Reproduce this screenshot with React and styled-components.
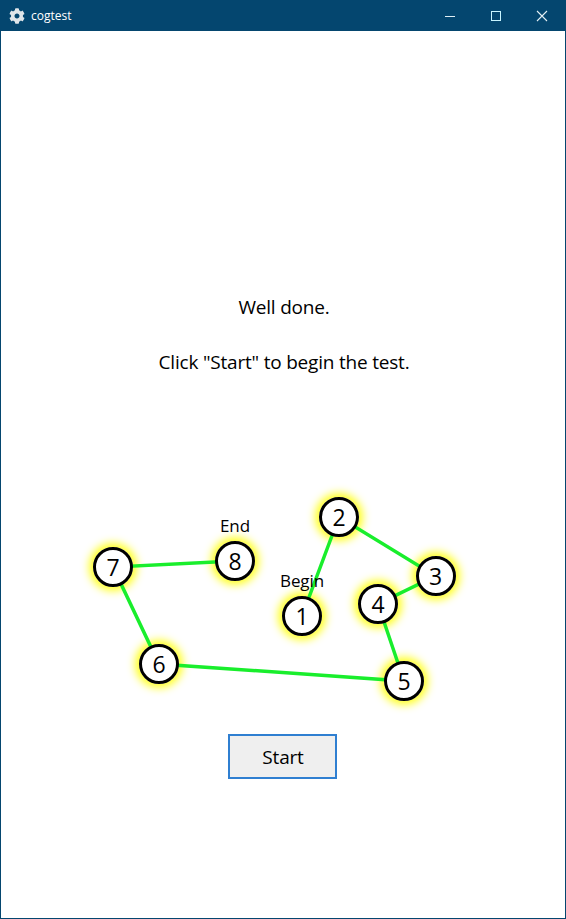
import styled, { createGlobalStyle } from 'styled-components'
import { FaCog } from 'react-icons/fa'

const NODES = [
  { n: 1, x: 302, y: 616 },
  { n: 2, x: 339, y: 517 },
  { n: 3, x: 435.5, y: 576 },
  { n: 4, x: 378, y: 604 },
  { n: 5, x: 404, y: 681 },
  { n: 6, x: 159, y: 664 },
  { n: 7, x: 113, y: 567 },
  { n: 8, x: 235, y: 561 }
]

// canvas starts below the message block
const CANVAS_TOP = 480

export default function App () {
  return (
    <>
      <GlobalStyle />
      <Window>
        <TitleBar>
          <TitleLeft>
            <FaCog size={16} color='#dfe5e9' />
            <TitleText>cogtest</TitleText>
          </TitleLeft>
          <Controls>
            <ControlButton>
              <svg width='12' height='12' viewBox='0 0 12 12'>
                <path d='M1 6.5h10' stroke='#dfeef5' strokeWidth='1' fill='none' />
              </svg>
            </ControlButton>
            <ControlButton>
              <svg width='12' height='12' viewBox='0 0 12 12'>
                <rect x='1.5' y='1.5' width='9' height='9' stroke='#c8f4ff' strokeWidth='1' fill='none' />
              </svg>
            </ControlButton>
            <ControlButton>
              <svg width='12' height='12' viewBox='0 0 12 12'>
                <path d='M1 1l10 10M11 1L1 11' stroke='#e4f0f5' strokeWidth='1.1' fill='none' />
              </svg>
            </ControlButton>
          </Controls>
        </TitleBar>
        <Content>
          <Message>
            <MessageLine>Well done.</MessageLine>
            <MessageLine>Click "Start" to begin the test.</MessageLine>
          </Message>
          <Canvas>
            {NODES.map(({ n, x, y }) => (
              <Glow key={n} style={{ left: x - 1, top: y - CANVAS_TOP }} />
            ))}
            <Lines viewBox='0 0 566 270'>
              <polyline
                points={NODES.map(({ x, y }) => `${x - 1},${y - CANVAS_TOP}`).join(' ')}
                fill='none'
                stroke='#19ee2c'
                strokeWidth='3.5'
              />
            </Lines>
            {NODES.map(({ n, x, y }) => (
              <Node key={n} style={{ left: x - 1, top: y - CANVAS_TOP }}>{n}</Node>
            ))}
            <NodeLabel style={{ left: 301, top: 100 }}>Begin</NodeLabel>
            <NodeLabel style={{ left: 234, top: 45 }}>End</NodeLabel>
          </Canvas>
          <StartButton>Start</StartButton>
        </Content>
      </Window>
    </>
  )
}

const GlobalStyle = createGlobalStyle`
  * {
    box-sizing: border-box;
  }

  html, body {
    margin: 0;
    padding: 0;
    height: 100%;
    background: #fff;
  }

  #root {
    height: 100%;
  }
`

const Window = styled.div`
  width: 566px;
  height: 919px;
  display: flex;
  flex-direction: column;
  border: 1px solid #04466f;
  border-top: none;
  background: #fff;
  font-family: "Open Sans", "Noto Sans", sans-serif;
  color: #000;
`

const TitleBar = styled.div`
  height: 31px;
  flex-shrink: 0;
  display: flex;
  align-items: center;
  justify-content: space-between;
  background: #04466f;
  margin: 0 -1px;
`

const TitleLeft = styled.div`
  display: flex;
  align-items: center;
  gap: 6px;
  padding-left: 9px;
`

const TitleText = styled.span`
  font-size: 12px;
  color: #fff;
`

const Controls = styled.div`
  display: flex;
  padding-right: 1px;
`

const ControlButton = styled.div`
  width: 46px;
  height: 31px;
  display: flex;
  align-items: center;
  justify-content: center;
`

const Content = styled.div`
  flex: 1;
  display: flex;
  flex-direction: column;
  align-items: center;
`

const Message = styled.div`
  width: 100%;
  height: 449px;
  padding: 264px 0 0 2px;
  display: flex;
  flex-direction: column;
  align-items: center;
  gap: 30px;
`

const MessageLine = styled.div`
  font-size: 19px;
  line-height: 25px;
  letter-spacing: -0.2px;
`

const Canvas = styled.div`
  position: relative;
  width: 100%;
  height: 255px;
`

const Glow = styled.div`
  position: absolute;
  width: 40px;
  height: 40px;
  margin: -20px 0 0 -20px;
  border-radius: 50%;
  background: #fff;
  box-shadow: 0 0 8px 4px #ffff20;
`

const Lines = styled.svg`
  position: absolute;
  left: 0;
  top: 0;
  width: 566px;
  height: 270px;
`

const Node = styled.div`
  position: absolute;
  width: 40px;
  height: 40px;
  margin: -20px 0 0 -20px;
  display: flex;
  align-items: center;
  justify-content: center;
  border-radius: 50%;
  border: 3px solid #000;
  background: #fff;
  font-size: 23px;
`

const NodeLabel = styled.div`
  position: absolute;
  transform: translate(-50%, -50%);
  font-size: 17px;
  letter-spacing: -0.1px;
`

const StartButton = styled.button`
  width: 109px;
  height: 45px;
  margin-right: 2px;
  margin-top: -1px;
  border: 2px solid #2f7fd1;
  background: #efefef;
  font-family: inherit;
  font-size: 19px;
  letter-spacing: -0.2px;
  color: #000;
  padding: 1px 0 0 2px;
`
